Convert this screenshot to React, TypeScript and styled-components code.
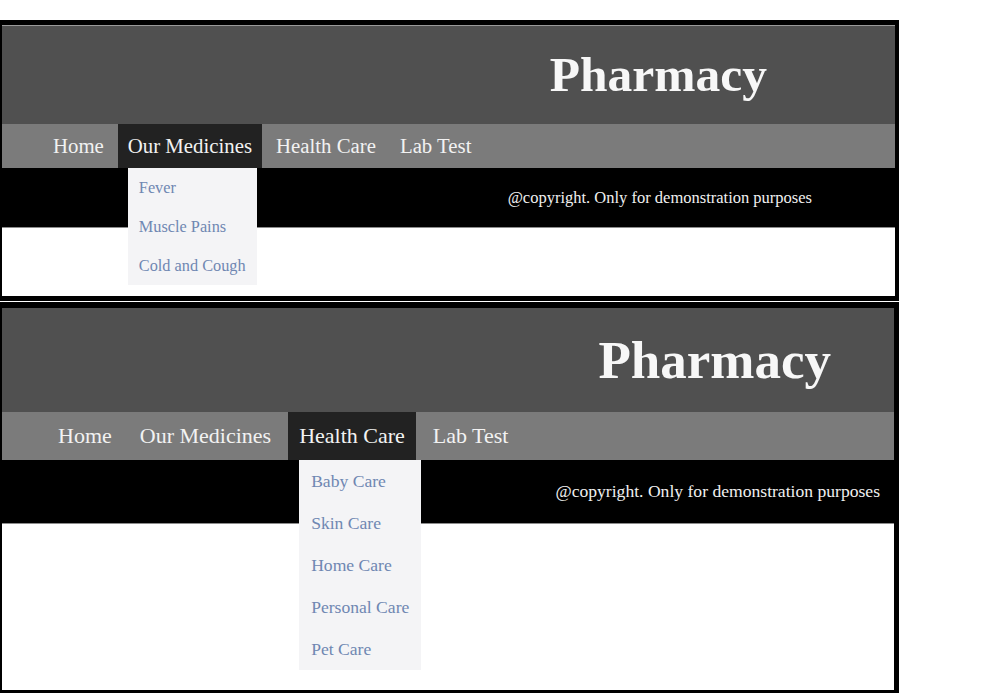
import React from "react";
import styled, { createGlobalStyle } from "styled-components";

const Global = createGlobalStyle`
  html, body { margin: 0; padding: 0; background: #ffffff; }
  body { font-family: "Liberation Serif", "Times New Roman", serif; }
  * { box-sizing: border-box; }
`;

type PanelConfig = {
  borders: string;
  headerH: number;
  headerLine: boolean;
  navH: number;
  footerH: number;
  bodyH: number;
  titleSize: number;
  titlePad: number;
  navPadL: number;
  navFont: number;
  itemPad: number;
  gap: number;
  footFont: number;
  footPad: number;
  ddWidth: number;
  ddItemH: number;
  ddFont: number;
  ddPadL: number;
  active: number;
  dropdown: string[];
};

const NAV = ["Home", "Our Medicines", "Health Care", "Lab Test"];

const Page = styled.div`
  padding-top: 20px;
  display: flex;
  flex-direction: column;
  gap: 1px;
  width: 899px;
`;

const Frame = styled.div<{ $borders: string }>`
  border-style: solid;
  border-color: #000;
  border-width: ${(p) => p.$borders};
  display: flex;
  flex-direction: column;
  background: #ffffff;
`;

const Header = styled.header<{ $h: number; $pad: number; $line: boolean }>`
  height: ${(p) => p.$h}px;
  background: #505050;
  border-top: ${(p) => (p.$line ? "1px solid #9a9a9a" : "none")};
  display: flex;
  align-items: center;
  justify-content: flex-end;
  padding-right: ${(p) => p.$pad}px;
`;

const Title = styled.h1<{ $size: number }>`
  margin: 0;
  font-family: "Liberation Serif", "Times New Roman", serif;
  font-weight: 700;
  font-size: ${(p) => p.$size}px;
  line-height: 1;
  color: #f7f7f7;
`;

const Nav = styled.nav<{ $h: number; $padL: number; $gap: number }>`
  height: ${(p) => p.$h}px;
  background: #7b7b7b;
  display: flex;
  align-items: stretch;
  gap: ${(p) => p.$gap}px;
  padding-left: ${(p) => p.$padL}px;
  position: relative;
  z-index: 2;
`;

const NavItem = styled.div<{ $active: boolean; $font: number; $pad: number }>`
  position: relative;
  display: flex;
  align-items: center;
  padding: 0 ${(p) => p.$pad}px;
  font-size: ${(p) => p.$font}px;
  color: #f2f2f2;
  background: ${(p) => (p.$active ? "#222222" : "transparent")};
  white-space: nowrap;
`;

const Dropdown = styled.ul<{ $left: number; $w: number }>`
  position: absolute;
  top: 100%;
  left: ${(p) => p.$left}px;
  width: ${(p) => p.$w}px;
  margin: 0;
  padding: 0;
  list-style: none;
  background: #f4f4f6;
`;

const DropItem = styled.li<{ $h: number; $font: number; $padL: number }>`
  height: ${(p) => p.$h}px;
  display: flex;
  align-items: center;
  padding-left: ${(p) => p.$padL}px;
  font-size: ${(p) => p.$font}px;
  color: #6f87b2;
  white-space: nowrap;
`;

const Footer = styled.footer<{ $h: number; $pad: number; $font: number }>`
  height: ${(p) => p.$h}px;
  background: #000;
  border-bottom: 1px solid #8c8c8c;
  display: flex;
  align-items: center;
  justify-content: flex-end;
  padding-right: ${(p) => p.$pad}px;
  font-size: ${(p) => p.$font}px;
  color: #f0f0f0;
`;

const Body = styled.main<{ $h: number }>`
  height: ${(p) => p.$h}px;
  background: #ffffff;
`;

const Panel: React.FC<{ c: PanelConfig }> = ({ c }) => (
  <Frame $borders={c.borders}>
    <Header $h={c.headerH} $pad={c.titlePad} $line={c.headerLine}>
      <Title $size={c.titleSize}>Pharmacy</Title>
    </Header>
    <Nav $h={c.navH} $padL={c.navPadL} $gap={c.gap}>
      {NAV.map((label, i) => (
        <NavItem key={label} $active={i === c.active} $font={c.navFont} $pad={c.itemPad}>
          {label}
          {i === c.active && (
            <Dropdown $left={c.itemPad} $w={c.ddWidth}>
              {c.dropdown.map((d) => (
                <DropItem key={d} $h={c.ddItemH} $font={c.ddFont} $padL={c.ddPadL}>
                  {d}
                </DropItem>
              ))}
            </Dropdown>
          )}
        </NavItem>
      ))}
    </Nav>
    <Footer $h={c.footerH} $pad={c.footPad} $font={c.footFont}>
      @copyright. Only for demonstration purposes
    </Footer>
    <Body $h={c.bodyH} />
  </Frame>
);

const panel1: PanelConfig = {
  borders: "5px 4px 5px 2px",
  headerH: 99,
  headerLine: true,
  navH: 44,
  footerH: 60,
  bodyH: 68,
  titleSize: 49.5,
  titlePad: 128,
  navPadL: 41,
  navFont: 20.8,
  itemPad: 10,
  gap: 4,
  footFont: 16.5,
  footPad: 83,
  ddWidth: 129,
  ddItemH: 39,
  ddFont: 16.3,
  ddPadL: 11,
  active: 1,
  dropdown: ["Fever", "Muscle Pains", "Cold and Cough"],
};

const panel2: PanelConfig = {
  borders: "6px 5px 3px 2px",
  headerH: 104,
  headerLine: false,
  navH: 48,
  footerH: 64,
  bodyH: 166,
  titleSize: 53,
  titlePad: 63,
  navPadL: 45,
  navFont: 22,
  itemPad: 11,
  gap: 6,
  footFont: 17.6,
  footPad: 14,
  ddWidth: 122,
  ddItemH: 42,
  ddFont: 17.6,
  ddPadL: 12,
  active: 2,
  dropdown: ["Baby Care", "Skin Care", "Home Care", "Personal Care", "Pet Care"],
};

export default function App() {
  return (
    <>
      <Global />
      <Page>
        <Panel c={panel1} />
        <Panel c={panel2} />
      </Page>
    </>
  );
}
